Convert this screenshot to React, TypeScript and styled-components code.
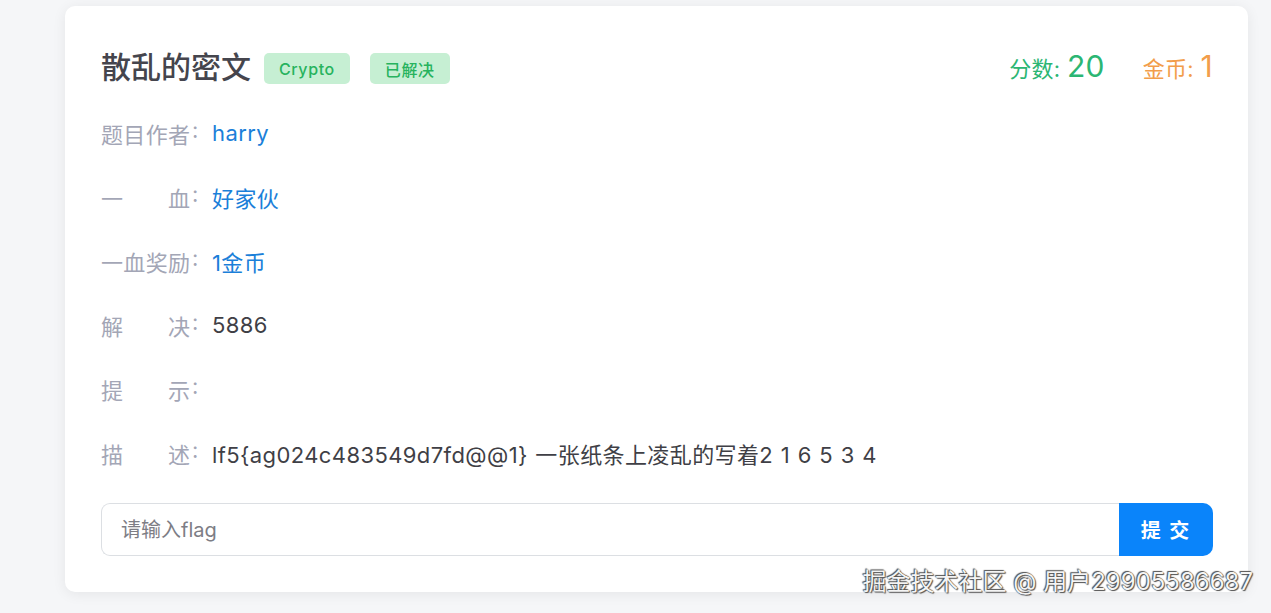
import React from 'react'
import styled, { createGlobalStyle } from 'styled-components'

const GlobalStyle = createGlobalStyle`
    html, body {
        margin: 0;
        padding: 0;
        background: #f5f6f8;
        font-family: Inter, "Noto Sans CJK SC", sans-serif;
    }
`

const ROWS = [
    { label: '题目作者', value: 'harry', tone: 'link' },
    { label: '一血', value: '好家伙', tone: 'link' },
    { label: '一血奖励', value: '1金币', tone: 'link' },
    { label: '解决', value: '5886', tone: 'plain' },
    { label: '提示', value: '', tone: 'plain' },
    { label: '描述', value: 'lf5{ag024c483549d7fd@@1} 一张纸条上凌乱的写着2 1 6 5 3 4', tone: 'plain' },
]

const App: React.FC = () => {
    return (
        <Page>
            <GlobalStyle />
            <Card>
                <Header>
                    <Title>散乱的密文</Title>
                    <Tag>Crypto</Tag>
                    <Tag>已解决</Tag>
                    <Stats>
                        <Stat color="#2bb673">分数: <b>20</b></Stat>
                        <Stat color="#f29d4b">金币: <b>1</b></Stat>
                    </Stats>
                </Header>
                {ROWS.map(({ label, value, tone }) => (
                    <Row key={label}>
                        <Label>
                            <LabelText>{label}</LabelText>:
                        </Label>
                        <Value tone={tone}>{value}</Value>
                    </Row>
                ))}
                <Submit>
                    <FlagInput placeholder="请输入flag" />
                    <SubmitButton>提 交</SubmitButton>
                </Submit>
            </Card>
            <Watermark>掘金技术社区 @ 用户29905586687</Watermark>
        </Page>
    )
}

export default App

const Page = styled.div`
    position: relative;
    width: 1271px;
    height: 613px;
    padding-top: 6px;
    box-sizing: border-box;
    overflow: hidden;
`

const Card = styled.div`
    margin-left: 65px;
    width: 1183px;
    box-sizing: border-box;
    padding: 30px 35px 36px 36px;
    background: #fff;
    border-radius: 10px;
    box-shadow: 0 2px 14px rgba(0, 0, 0, 0.07);
`

const Header = styled.div`
    height: 65px;
    display: flex;
    align-items: center;
`

const Title = styled.h1`
    margin: 0 13px 8px 0;
    font-size: 30px;
    font-weight: 500;
    color: #45454d;
`

const Tag = styled.span`
    height: 31px;
    padding: 0 15px;
    margin-right: 20px;
    display: inline-flex;
    align-items: center;
    border-radius: 5px;
    background: #c6efd3;
    color: #27b35e;
    font-size: 16px;
    font-weight: 500;
    letter-spacing: 0.6px;
`

const Stats = styled.div`
    margin: 0 0 6px auto;
    display: flex;
    align-items: baseline;
    gap: 38px;
`

const Stat = styled.span<{ color: string }>`
    color: ${({ color }) => color};
    font-size: 22px;
    letter-spacing: 0.3px;

    b {
        font-weight: 400;
        font-size: 30px;
    }
`

const Row = styled.div`
    height: 64px;
    display: flex;
    align-items: center;
    font-size: 22px;
`

const Label = styled.div`
    display: flex;
    width: 111px;
    flex-shrink: 0;
    color: #a3a6b6;
`

const LabelText = styled.span`
    width: 89px;
    margin-right: 2px;
    text-align: justify;
    text-align-last: justify;
`

const Value = styled.span<{ tone: string }>`
    color: ${({ tone }) => (tone === 'link' ? '#1b7fd9' : '#3f3f46')};
    letter-spacing: 0.4px;
    word-spacing: 1px;
`

const Submit = styled.div`
    margin-top: 18px;
    display: flex;
    height: 53px;
`

const FlagInput = styled.input`
    flex: 1;
    min-width: 0;
    box-sizing: border-box;
    padding: 0 19px;
    border: 1px solid #dcdfe3;
    border-right: none;
    border-radius: 9px 0 0 9px;
    font-family: inherit;
    font-size: 20px;
    color: #333;
    outline: none;

    &::placeholder {
        color: #7d7d85;
    }
`

const SubmitButton = styled.button`
    width: 94px;
    border: none;
    border-radius: 0 10px 10px 0;
    background: #0a84fa;
    color: #fff;
    font-family: inherit;
    font-size: 20px;
    font-weight: 700;
    letter-spacing: 2px;
`

const Watermark = styled.div`
    position: absolute;
    right: 18px;
    bottom: 16px;
    font-size: 24px;
    color: #f4f4f4;
    text-shadow: 0 0 1px #333, 1px 1px 1px #555, -1px -1px 1px #555;
    white-space: nowrap;
`
